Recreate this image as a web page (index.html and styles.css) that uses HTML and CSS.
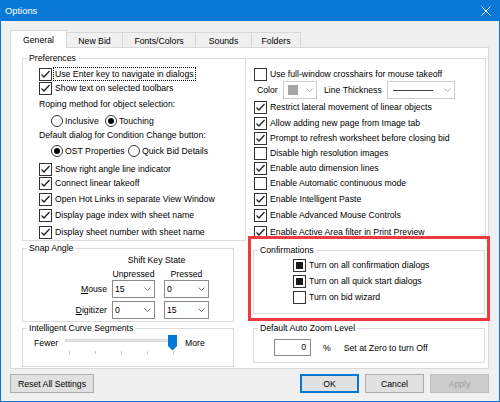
FILE: index.html
```html
<!DOCTYPE html>
<html>
<head>
<meta charset="utf-8">
<link rel="stylesheet" href="styles.css">
</head>
<body>
<div class="window">
  <div class="titlebar">
    <span class="title">Options</span>
    <svg class="close" width="10" height="10" viewBox="0 0 10 10"><path d="M0.5 0.5L9.5 9.5M9.5 0.5L0.5 9.5" stroke="#fff" stroke-width="1" fill="none"/></svg>
  </div>
  <div class="body">
    <div class="tabs">
      <div class="tab sel w57">General</div>
      <div class="tab w56">New Bid</div>
      <div class="tab w74">Fonts/Colors</div>
      <div class="tab w57">Sounds</div>
      <div class="tab w50">Folders</div>
    </div>
    <div class="panel">
      <div class="col-left">
        <fieldset class="group prefs">
          <legend>Preferences</legend>
          <div class="inner prefs-inner">
            <div class="row"><span class="cb"><svg class="ck" viewBox="0 0 11 11"><path d="M1.5 5.5L4 8L9.5 2"/></svg></span><span class="lbl focus">Use Enter key to navigate in dialogs</span></div>
            <div class="row"><span class="cb"><svg class="ck" viewBox="0 0 11 11"><path d="M1.5 5.5L4 8L9.5 2"/></svg></span><span class="lbl">Show text on selected toolbars</span></div>
            <div class="row mt2">Roping method for object selection:</div>
            <div class="row mt3 radios">
              <span class="rd"></span><span class="lbl r1">Inclusive</span>
              <span class="rd on"></span><span class="lbl">Touching</span>
            </div>
            <div class="row">Default dialog for Condition Change button:</div>
            <div class="row mt2 radios">
              <span class="rd on"></span><span class="lbl r2">OST Properties</span>
              <span class="rd"></span><span class="lbl">Quick Bid Details</span>
            </div>
            <div class="row mt4"><span class="cb"><svg class="ck" viewBox="0 0 11 11"><path d="M1.5 5.5L4 8L9.5 2"/></svg></span><span class="lbl">Show right angle line indicator</span></div>
            <div class="row"><span class="cb"><svg class="ck" viewBox="0 0 11 11"><path d="M1.5 5.5L4 8L9.5 2"/></svg></span><span class="lbl">Connect linear takeoff</span></div>
            <div class="row mt2"><span class="cb"><svg class="ck" viewBox="0 0 11 11"><path d="M1.5 5.5L4 8L9.5 2"/></svg></span><span class="lbl">Open Hot Links in separate View Window</span></div>
            <div class="row mt2"><span class="cb"><svg class="ck" viewBox="0 0 11 11"><path d="M1.5 5.5L4 8L9.5 2"/></svg></span><span class="lbl">Display page index with sheet name</span></div>
            <div class="row mt3"><span class="cb"><svg class="ck" viewBox="0 0 11 11"><path d="M1.5 5.5L4 8L9.5 2"/></svg></span><span class="lbl">Display sheet number with sheet name</span></div>
          </div>
        </fieldset>

        <fieldset class="group snap">
          <legend>Snap Angle</legend>
          <div class="inner snap-inner">
            <div class="srow h11"><span class="slabel"></span><span class="shift">Shift Key State</span></div>
            <div class="srow h11 mt3"><span class="slabel"></span><span class="c1 center">Unpressed</span><span class="c2 center">Pressed</span></div>
            <div class="srow h18 mt1"><span class="slabel"><u>M</u>ouse</span>
              <span class="combo c1"><span>15</span><svg class="chev" width="7" height="4" viewBox="0 0 7 4"><path d="M0.5 0.5L3.5 3.5L6.5 0.5"/></svg></span>
              <span class="combo c2"><span>0</span><svg class="chev" width="7" height="4" viewBox="0 0 7 4"><path d="M0.5 0.5L3.5 3.5L6.5 0.5"/></svg></span>
            </div>
            <div class="srow h18 mt3"><span class="slabel"><u>D</u>igitizer</span>
              <span class="combo c1"><span>0</span><svg class="chev" width="7" height="4" viewBox="0 0 7 4"><path d="M0.5 0.5L3.5 3.5L6.5 0.5"/></svg></span>
              <span class="combo c2"><span>15</span><svg class="chev" width="7" height="4" viewBox="0 0 7 4"><path d="M0.5 0.5L3.5 3.5L6.5 0.5"/></svg></span>
            </div>
          </div>
        </fieldset>

        <fieldset class="group curve">
          <legend>Intelligent Curve Segments</legend>
          <div class="inner curve-inner">
            <span class="fewer">Fewer</span>
            <div class="slider">
              <div class="track"></div>
              <div class="ticks"><i></i><i></i><i></i><i></i><i></i></div>
              <svg class="thumb" width="9" height="16" viewBox="0 0 9 16"><path d="M0 0H9V11L4.5 15.5L0 11Z" fill="#0078d7"/></svg>
            </div>
            <span class="more">More</span>
          </div>
        </fieldset>
      </div>

      <div class="col-right">
        <div class="rbox">
          <div class="row"><span class="cb"></span><span class="lbl">Use full-window crosshairs for mouse takeoff</span></div>
          <div class="row h18 colorrow">
            <span class="clabel">Color</span>
            <span class="combo dis colorcombo"><span class="swatch"></span><svg class="chev" width="7" height="4" viewBox="0 0 7 4"><path d="M0.5 0.5L3.5 3.5L6.5 0.5"/></svg></span>
            <span class="tlabel">Line Thickness</span>
            <span class="combo dis linecombo"><span class="line"></span><svg class="chev" width="7" height="4" viewBox="0 0 7 4"><path d="M0.5 0.5L3.5 3.5L6.5 0.5"/></svg></span>
          </div>
          <div class="row mt1"><span class="cb"><svg class="ck" viewBox="0 0 11 11"><path d="M1.5 5.5L4 8L9.5 2"/></svg></span><span class="lbl">Restrict lateral movement of linear objects</span></div>
          <div class="row mt2"><span class="cb"><svg class="ck" viewBox="0 0 11 11"><path d="M1.5 5.5L4 8L9.5 2"/></svg></span><span class="lbl">Allow adding new page from Image tab</span></div>
          <div class="row mt1"><span class="cb"><svg class="ck" viewBox="0 0 11 11"><path d="M1.5 5.5L4 8L9.5 2"/></svg></span><span class="lbl">Prompt to refresh worksheet before closing bid</span></div>
          <div class="row mt1"><span class="cb"></span><span class="lbl">Disable high resolution images</span></div>
          <div class="row mt1"><span class="cb"><svg class="ck" viewBox="0 0 11 11"><path d="M1.5 5.5L4 8L9.5 2"/></svg></span><span class="lbl">Enable auto dimension lines</span></div>
          <div class="row mt1"><span class="cb"></span><span class="lbl">Enable Automatic continuous mode</span></div>
          <div class="row mt2"><span class="cb"><svg class="ck" viewBox="0 0 11 11"><path d="M1.5 5.5L4 8L9.5 2"/></svg></span><span class="lbl">Enable Intelligent Paste</span></div>
          <div class="row mt2"><span class="cb"><svg class="ck" viewBox="0 0 11 11"><path d="M1.5 5.5L4 8L9.5 2"/></svg></span><span class="lbl">Enable Advanced Mouse Controls</span></div>
          <div class="row mt3"><span class="cb"><svg class="ck" viewBox="0 0 11 11"><path d="M1.5 5.5L4 8L9.5 2"/></svg></span><span class="lbl">Enable Active Area filter in Print Preview</span></div>
        </div>

        <div class="confirm-wrap">
          <fieldset class="group confirm">
            <legend>Confirmations</legend>
            <div class="inner confirm-inner">
              <div class="row"><span class="cb sq"></span><span class="lbl">Turn on all confirmation dialogs</span></div>
              <div class="row mt2"><span class="cb sq"></span><span class="lbl">Turn on all quick start dialogs</span></div>
              <div class="row mt2"><span class="cb"></span><span class="lbl">Turn on bid wizard</span></div>
            </div>
          </fieldset>
          <div class="highlight"></div>
        </div>

        <fieldset class="group zoom">
          <legend>Default Auto Zoom Level</legend>
          <div class="inner zoom-inner">
            <span class="numbox">0</span>
            <span class="pct">%</span>
            <span class="hint">Set at Zero to turn Off</span>
          </div>
        </fieldset>
      </div>
    </div>
    <div class="buttons">
      <span class="btn reset">Reset All Settings</span>
      <div class="btn-group">
        <span class="btn ok">OK</span>
        <span class="btn">Cancel</span>
        <span class="btn disabled">Apply</span>
      </div>
    </div>
  </div>
</div>
</body>
</html>
```

FILE: styles.css
```css
html, body {
  margin: 0;
  padding: 0;
}
body {
  width: 500px;
  height: 402px;
  overflow: hidden;
  background: #f0f0f0;
  font-family: "Liberation Sans", Arial, sans-serif;
  font-size: 8.7px;
  color: #000;
}
.window {
  width: 500px;
  height: 402px;
  box-sizing: border-box;
  border: 1px solid #0a78d7;
  border-top: none;
  background: #f0f0f0;
}
.titlebar {
  height: 21px;
  background: #0a78d7;
  display: flex;
  align-items: center;
  justify-content: space-between;
  padding: 0 8px 0 4px;
}
.title {
  color: #fff;
  font-size: 9.4px;
}
.close {
  display: block;
  margin-top: 1px;
}
.body {
  padding: 9px 0 0 9px;
}
.tabs {
  display: flex;
  align-items: flex-end;
  height: 17px;
}
.tab {
  box-sizing: border-box;
  height: 15px;
  border: 1px solid #d9d9d9;
  border-bottom: none;
  background: #f0f0f0;
  display: flex;
  align-items: center;
  justify-content: center;
  margin-left: -1px;
  padding-top: 1px;
}
.tab.sel {
  height: 18px;
  margin-left: 0;
  margin-bottom: -1px;
  background: #fff;
  position: relative;
  z-index: 1;
  padding-top: 0;
}
.w57 { width: 57px; }
.w56 { width: 57px; }
.w74 { width: 74px; }
.w50 { width: 50px; }
.panel {
  width: 479px;
  height: 322px;
  box-sizing: border-box;
  border: 1px solid #d9d9d9;
  background: #fff;
  display: flex;
  padding-left: 11px;
}
.col-left {
  width: 224px;
  display: flex;
  flex-direction: column;
}
.col-right {
  width: 239px;
  margin-left: 1px;
  display: flex;
  flex-direction: column;
}
.group {
  margin: 0;
  padding: 0;
  border: 1px solid #dcdcdc;
  min-width: 0;
  box-sizing: border-box;
}
.group legend {
  padding: 0 2px;
  margin-left: 4px;
  height: 11px;
  line-height: 11px;
}
.prefs {
  margin-top: 5px;
  width: 224px;
}
.prefs-inner {
  padding: 3px 0 1px 16px;
}
.row {
  height: 14px;
  display: flex;
  align-items: center;
  white-space: nowrap;
}
.h18 { height: 18px; }
.h11 { height: 11px; }
.mt1 { margin-top: 1px; }
.mt2 { margin-top: 2px; }
.mt3 { margin-top: 3px; }
.mt4 { margin-top: 4px; }
.cb {
  width: 13px;
  height: 13px;
  box-sizing: border-box;
  border: 1px solid #333;
  background: #fff;
  flex: none;
  display: flex;
  align-items: center;
  justify-content: center;
}
.ck {
  width: 11px;
  height: 11px;
  display: block;
}
.ck path {
  fill: none;
  stroke: #222;
  stroke-width: 1.3;
}
.cb.sq::after {
  content: "";
  width: 7px;
  height: 7px;
  background: #1a1a1a;
}
.lbl {
  margin-left: 1px;
  line-height: 12px;
  padding: 0 1px;
  border: 1px solid transparent;
}
.focus {
  border: 1px dotted #000;
}
.radios {
  padding-left: 12px;
}
.rd {
  width: 12px;
  height: 12px;
  box-sizing: border-box;
  border: 1px solid #333;
  border-radius: 50%;
  background: #fff;
  flex: none;
  display: flex;
  align-items: center;
  justify-content: center;
}
.rd.on::after {
  content: "";
  width: 6px;
  height: 6px;
  border-radius: 50%;
  background: #000;
}
.radios .lbl {
  margin-left: 0;
}
.r1 { width: 38px; }
.r2 { width: 61px; }
.snap {
  margin-top: 2px;
  width: 212px;
}
.snap-inner {
  padding: 0 0 2px 0;
}
.srow {
  display: flex;
  align-items: center;
  white-space: nowrap;
}
.slabel {
  width: 84px;
  text-align: right;
  flex: none;
}
.shift {
  margin-left: 5px;
  width: 97px;
  text-align: center;
  padding-right: 8px;
  box-sizing: border-box;
}
.c1 {
  margin-left: 5px;
  width: 43px;
}
.c2 {
  margin-left: 9px;
  width: 45px;
}
.center {
  text-align: center;
}
.combo {
  height: 18px;
  box-sizing: border-box;
  border: 1px solid #8a8a8a;
  background: #fff;
  display: flex;
  align-items: center;
  justify-content: space-between;
  padding: 0 3px 0 2px;
  flex: none;
}
.chev {
  display: block;
}
.chev path {
  fill: none;
  stroke: #707070;
  stroke-width: 1;
}
.combo.dis {
  border-color: #cccccc;
}
.combo.dis .chev path {
  stroke: #b0b0b0;
}
.curve {
  margin-top: 1px;
  width: 212px;
}
.curve-inner {
  display: flex;
  align-items: flex-start;
  padding: 0 0 12px 11px;
  height: 20px;
}
.fewer {
  width: 31px;
  line-height: 18px;
}
.more {
  margin-left: 7px;
  line-height: 18px;
}
.slider {
  width: 113px;
  height: 20px;
  position: relative;
}
.track {
  margin-top: 5px;
  margin-right: 4px;
  height: 3px;
  box-sizing: border-box;
  border: 1px solid #d6d6d6;
  background: #e7eaea;
}
.ticks {
  margin-top: 9px;
  height: 3px;
  display: flex;
  justify-content: space-between;
  padding: 0 4px;
}
.ticks i {
  display: block;
  width: 1px;
  height: 3px;
  background: #c4c4c4;
}
.thumb {
  position: absolute;
  left: 103px;
  top: 1px;
  display: block;
}
.rbox {
  margin-top: 10px;
  border-top: 1px solid #dcdcdc;
  border-right: 1px solid #dcdcdc;
  padding: 8px 0 2px 7px;
}
.colorrow {
  padding-left: 3px;
}
.clabel {
  width: 26px;
  flex: none;
}
.colorcombo {
  width: 34px;
  padding-left: 4px;
}
.swatch {
  width: 10px;
  height: 10px;
  background: #a6a6a6;
}
.tlabel {
  margin-left: 7px;
  width: 63px;
  flex: none;
}
.linecombo {
  width: 68px;
  padding-left: 5px;
}
.line {
  width: 40px;
  height: 1px;
  background: #444;
}
.confirm-wrap {
  margin-top: 4px;
  margin-left: 6px;
  width: 232px;
  position: relative;
}
.confirm {
  width: 232px;
}
.confirm-inner {
  padding: 2px 0 9px 39px;
}
.highlight {
  position: absolute;
  left: -5px;
  top: -9px;
  width: 242px;
  height: 85px;
  box-sizing: border-box;
  border: 3px solid #ee3b3f;
  pointer-events: none;
}
.zoom {
  margin-top: 9px;
  margin-left: 6px;
  width: 232px;
}
.zoom-inner {
  display: flex;
  align-items: center;
  padding: 5px 0 6px 20px;
}
.numbox {
  width: 37px;
  height: 17px;
  box-sizing: border-box;
  border: 1px solid #8a8a8a;
  background: #fff;
  text-align: right;
  padding-right: 4px;
  line-height: 15px;
}
.pct {
  margin-left: 12px;
}
.hint {
  margin-left: 13px;
}
.buttons {
  margin-top: 5px;
  width: 479px;
  display: flex;
  justify-content: space-between;
}
.btn-group {
  display: flex;
  gap: 6px;
}
.btn {
  height: 19px;
  width: 59px;
  box-sizing: border-box;
  border: 1px solid #adadad;
  background: #e1e1e1;
  display: flex;
  align-items: center;
  justify-content: center;
}
.btn.reset {
  width: 84px;
}
.btn.ok {
  border: 2px solid #0078d7;
}
.btn.disabled {
  background: #cccccc;
  border-color: #bfbfbf;
  color: #a0a0a0;
}
```
